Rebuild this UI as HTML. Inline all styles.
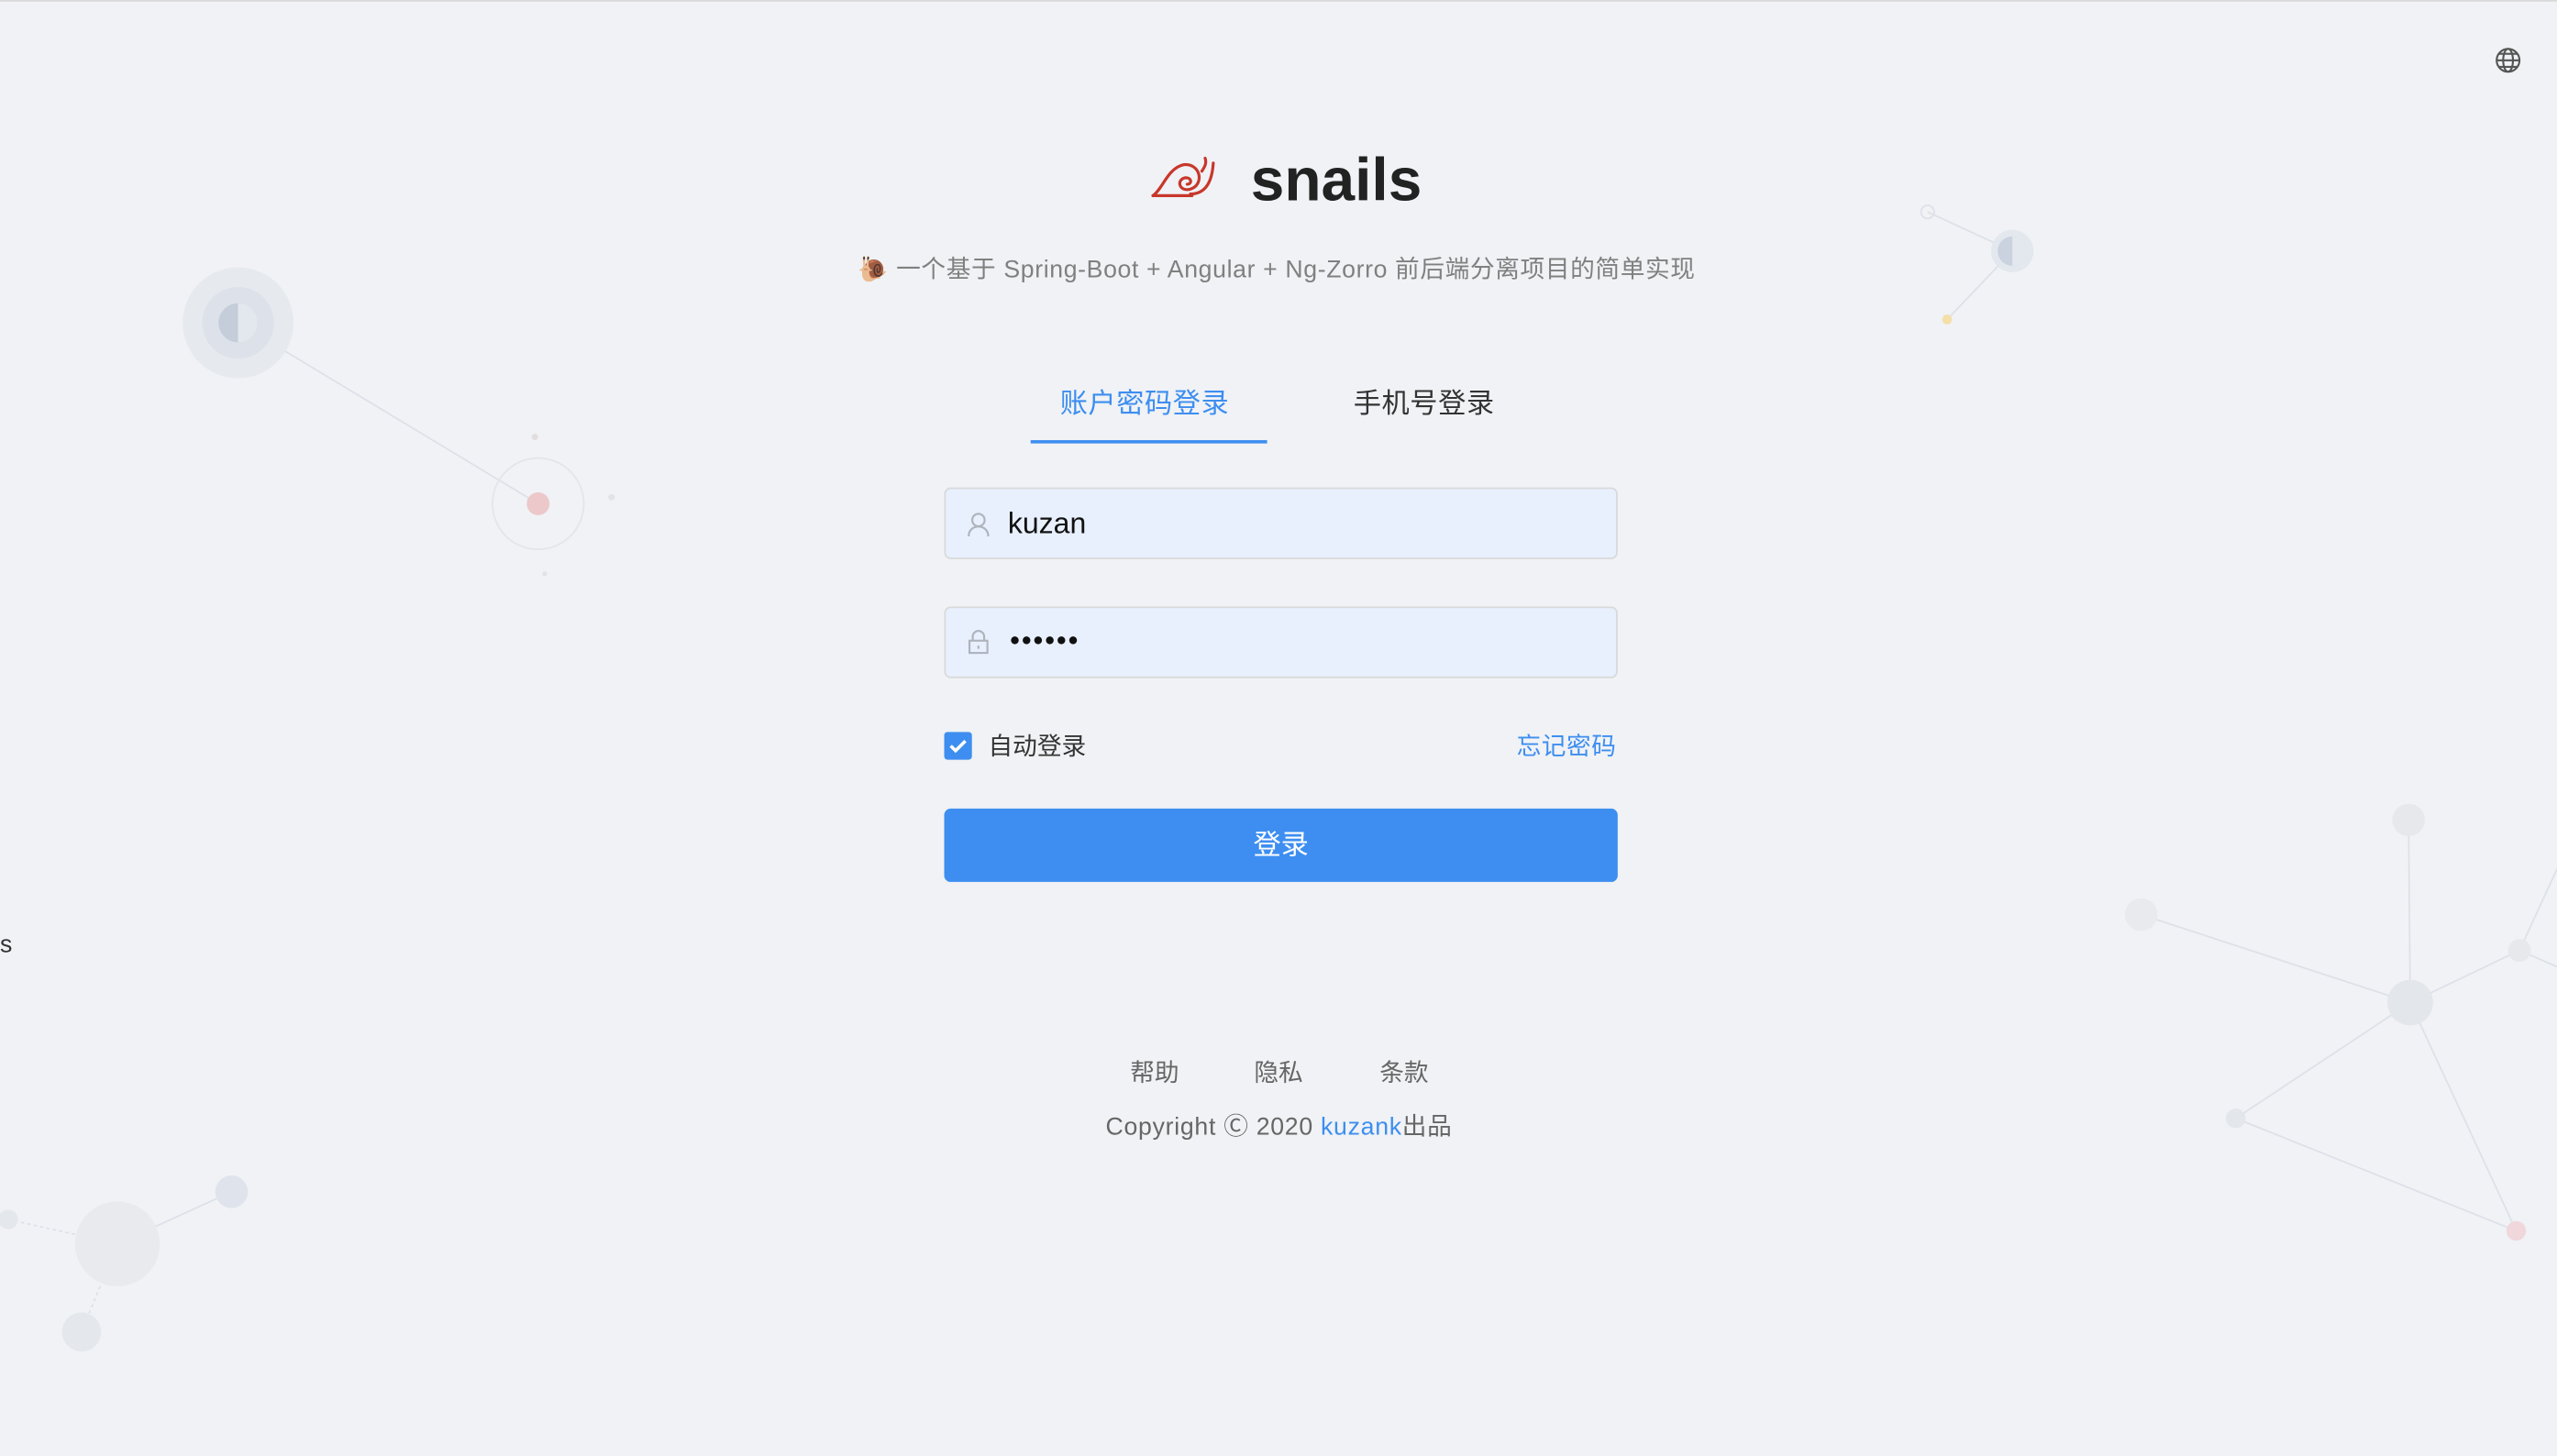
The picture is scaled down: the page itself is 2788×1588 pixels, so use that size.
<!DOCTYPE html>
<html><head><meta charset="utf-8"><style>
html,body{margin:0;padding:0;width:2788px;height:1586px;overflow:hidden;background:#f0f2f5;}
#w{position:absolute;left:0;top:0;width:1568px;height:892px;transform:scale(1.77806);transform-origin:0 0;font-family:"Liberation Sans","Noto Sans CJK SC",sans-serif;color:rgba(0,0,0,.65);border-top:1px solid #d9d9d9;box-sizing:border-box}
.a{position:absolute}
.inp{position:absolute;left:579px;width:413px;height:44px;background:#e8f0fe;border:1px solid #d9d9d9;border-radius:4px;box-sizing:border-box}
</style></head><body><div id="w">
<svg class="a" style="left:0;top:0" width="1568" height="892">
<g stroke="#dde1e8" stroke-width="1" fill="none">
<line x1="146" y1="197" x2="330" y2="308"/>
<line x1="1182" y1="129" x2="1234" y2="153"/><line x1="1234" y1="153" x2="1194" y2="195"/>
<line x1="1313" y1="560" x2="1478" y2="614"/><line x1="1477" y1="502" x2="1478" y2="614"/>
<line x1="1478" y1="614" x2="1545" y2="582"/><line x1="1478" y1="614" x2="1371" y2="685"/>
<line x1="1478" y1="614" x2="1543" y2="754"/><line x1="1371" y1="685" x2="1543" y2="754"/>
<line x1="1545" y1="582" x2="1568" y2="532"/><line x1="1545" y1="582" x2="1568" y2="592"/>
<line x1="72" y1="762" x2="142" y2="730"/><line x1="5" y1="747" x2="72" y2="762" stroke-dasharray="2 2"/><line x1="72" y1="762" x2="50" y2="816" stroke-dasharray="2 2"/>
</g>
<circle cx="146" cy="197" r="34" fill="#e6e9ee"/><circle cx="146" cy="197" r="22" fill="#dde2ea"/>
<circle cx="146" cy="197" r="12" fill="#c4cdd9"/><path d="M146 185a12 12 0 0 1 0 24z" fill="#e3e8ee"/>
<circle cx="330" cy="308" r="28" fill="none" stroke="#e5e5e8"/><circle cx="330" cy="308" r="7" fill="#ecc8cb"/>
<circle cx="328" cy="267" r="2" fill="#e3dede"/><circle cx="375" cy="304" r="2" fill="#e3e3e6"/><circle cx="334" cy="351" r="1.5" fill="#e3e3e6"/>
<circle cx="1182" cy="129" r="4" fill="none" stroke="#dde1e8"/>
<circle cx="1234" cy="153" r="13" fill="#e3e8ee"/><circle cx="1234" cy="153" r="9" fill="#c9d2de"/><path d="M1234 144a9 9 0 0 1 0 18z" fill="#e3e8ee"/>
<circle cx="1194" cy="195" r="3" fill="#f3dfa8"/>
<circle cx="1477" cy="502" r="10" fill="#e6e8ec"/><circle cx="1313" cy="560" r="10" fill="#e8eaee"/>
<circle cx="1478" cy="614" r="14" fill="#e3e6ea"/><circle cx="1545" cy="582" r="7" fill="#e6e8ec"/>
<circle cx="1371" cy="685" r="6" fill="#e3e6ea"/><circle cx="1543" cy="754" r="6" fill="#f0d7db"/>
<circle cx="72" cy="762" r="26" fill="#e8eaee"/><circle cx="142" cy="730" r="10" fill="#dfe4ec"/>
<circle cx="5" cy="747" r="6" fill="#e4e7ec"/><circle cx="50" cy="816" r="12" fill="#e4e7ec"/>
<g stroke="#555" fill="none" stroke-width="1.2"><circle cx="1538" cy="36" r="7"/><ellipse cx="1538" cy="36" rx="3" ry="7"/><line x1="1531" y1="36" x2="1545" y2="36"/><line x1="1532" y1="32" x2="1544" y2="32"/><line x1="1532" y1="40" x2="1544" y2="40"/></g>
<g stroke="#c8372b" fill="none" stroke-width="1.8" stroke-linecap="round">
<path d="M707 119c6-4 9-17 19-19 10-1 13 12 4 15-7 2-9-6-3-7 4 0 4 4 1 4"/><path d="M730 118c6 0 13-3 14-19"/><path d="M737 104c2-3 3-5 2-8"/><path d="M707 119h24"/>
</g>
</svg>
<div class="a" style="left:767px;top:89px;font-size:37px;font-weight:bold;color:#222">snails</div>
<div class="a" style="left:526px;top:153px;font-size:15px;color:#808080;white-space:nowrap;letter-spacing:0.35px">🐌 一个基于 Spring-Boot + Angular + Ng-Zorro 前后端分离项目的简单实现</div>
<div class="a" style="left:650px;top:232px;font-size:17px;color:#3d8ef0;letter-spacing:0.3px">账户密码登录</div>
<div class="a" style="left:632px;top:269px;width:145px;height:2px;background:#3d8ef0"></div>
<div class="a" style="left:830px;top:232px;font-size:17px;color:#333;letter-spacing:0.3px">手机号登录</div>
<div class="inp" style="top:298px"></div>
<svg class="a" style="left:593px;top:313px" width="14" height="16" fill="none" stroke="#aeb3bc" stroke-width="1.2"><circle cx="7" cy="5" r="3.8"/><path d="M1 15c0-4 3-6 6-6s6 2 6 6"/></svg>
<div class="a" style="left:618px;top:310px;font-size:18px;color:#111">kuzan</div>
<div class="inp" style="top:371px"></div>
<svg class="a" style="left:593px;top:385px" width="14" height="16" fill="none" stroke="#aeb3bc" stroke-width="1.2"><path d="M3.5 7V4.5a3.5 3.5 0 0 1 7 0V7"/><rect x="1.5" y="7" width="11" height="7.5"/><line x1="7" y1="10" x2="7" y2="12"/></svg>
<div class="a" style="left:619px;top:386px;font-size:11px;color:#111;letter-spacing:0.5px">●●●●●●</div>
<div class="a" style="left:579px;top:448px;width:17px;height:17px;background:#3d8ef0;border-radius:2px"></div>
<svg class="a" style="left:579px;top:448px" width="17" height="17"><path d="M4 8.5l3 3 6-6" stroke="#fff" stroke-width="2" fill="none"/></svg>
<div class="a" style="left:606px;top:446px;font-size:15px;color:#333">自动登录</div>
<div class="a" style="left:930px;top:446px;font-size:15px;color:#3d8ef0;letter-spacing:0.3px">忘记密码</div>
<div class="a" style="left:579px;top:495px;width:413px;height:45px;background:#3d8ef0;border-radius:4px;color:#fff;font-size:17px;text-align:center;line-height:45px">登录</div>
<div class="a" style="left:0;top:570px;font-size:15px;color:#333">s</div>
<div class="a" style="left:693px;top:646px;font-size:15px;color:#666">帮助</div>
<div class="a" style="left:769px;top:646px;font-size:15px;color:#666">隐私</div>
<div class="a" style="left:846px;top:646px;font-size:15px;color:#666">条款</div>
<div class="a" style="left:678px;top:679px;font-size:15px;color:#666;white-space:nowrap;letter-spacing:0.4px">Copyright Ⓒ 2020 <span style="color:#3d8ef0">kuzank</span>出品</div>
</div></body></html>
